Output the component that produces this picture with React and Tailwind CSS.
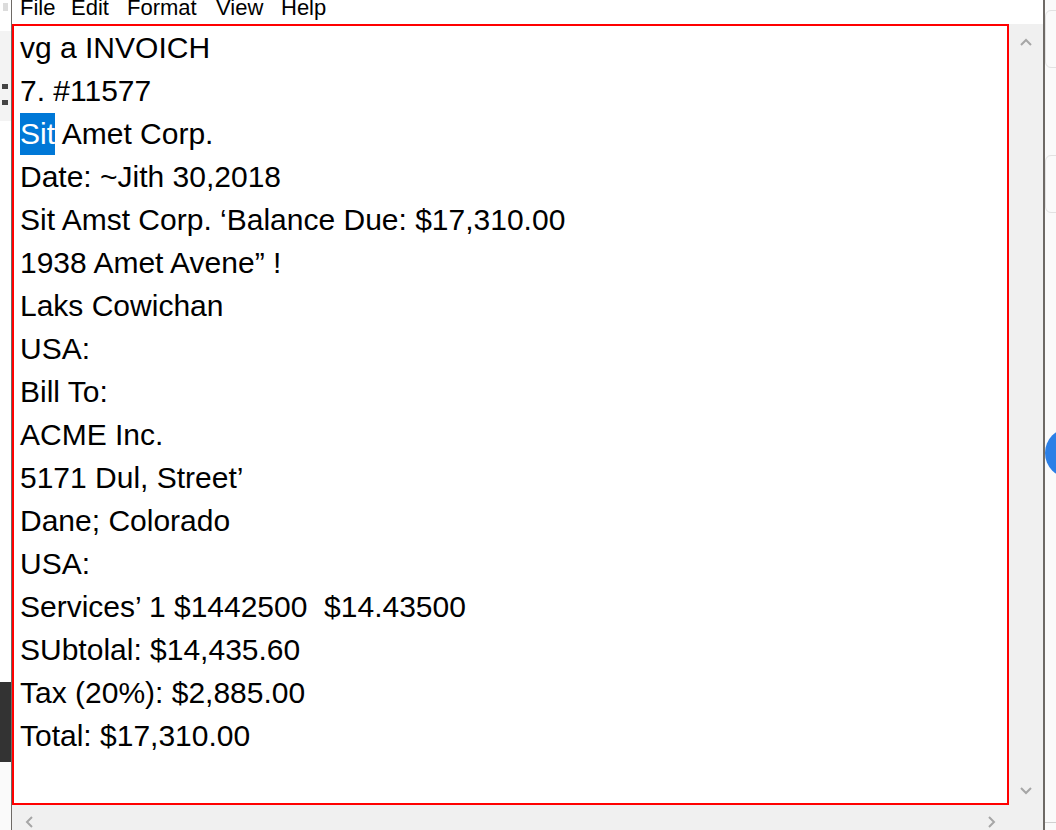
import React from 'react';

const lines = [
  'vg a INVOICH',
  '7. #11577',
  null,
  'Date: ~Jith 30,2018',
  'Sit Amst Corp. \u2018Balance Due: $17,310.00',
  '1938 Amet Avene\u201d !',
  'Laks Cowichan',
  'USA:',
  'Bill To:',
  'ACME Inc.',
  '5171 Dul, Street\u2019',
  'Dane; Colorado',
  'USA:',
  'Services\u2019 1 $1442500  $14.43500',
  'SUbtolal: $14,435.60',
  'Tax (20%): $2,885.00',
  'Total: $17,310.00',
];

const Chevron = ({ dir }) => {
  const pts = {
    up: '1,8 6,3 11,8',
    down: '1,3 6,8 11,3',
    left: '8,1 3,6 8,11',
    right: '3,1 8,6 3,11',
  }[dir];
  return (
    <svg width="12" height="12" viewBox="0 0 12 12">
      <polyline points={pts} fill="none" stroke="#a6a6a6" strokeWidth="2" />
    </svg>
  );
};

export default function App() {
  return (
    <div className="w-[1056px] h-[830px] flex bg-white overflow-hidden font-['Liberation_Sans',Arial,sans-serif] text-black">
      {/* left desktop strip */}
      <div className="w-[11px] flex flex-col">
        <div className="h-[3px]" />
        <div className="h-[8px] mx-[3px] bg-[#dcdcdc]" />
        <div className="h-[20px]" />
        <div className="h-[90px] bg-[#f3f3f3] flex flex-col">
          <div className="h-[5px] w-[6px] ml-[2px] mt-[53px] bg-[#444]" />
          <div className="h-[5px] w-[6px] ml-[2px] mt-[11px] bg-[#444]" />
        </div>
        <div className="flex-1 min-h-0" />
        <div className="h-[80px] bg-[#333333]" />
        <div className="h-[68px] bg-[#fafafa]" />
      </div>
      <div className="w-[1px] bg-[#6e6a66]" />

      {/* notepad window */}
      <div className="w-[1031px] flex flex-col">
        <div className="h-[24px] overflow-hidden">
          <div className="flex items-start text-[22px] leading-[22px] -mt-[3px] pl-[8px]">
            <span className="w-[51px]">File</span>
            <span className="w-[56px]">Edit</span>
            <span className="w-[89px]">Format</span>
            <span className="w-[65px]">View</span>
            <span>Help</span>
          </div>
        </div>
        <div className="flex flex-1 min-h-0">
          <div className="w-[997px] h-[781px] border-2 border-[#ff0000] pl-[6px] text-[30px] leading-[43px] overflow-hidden">
            {lines.map((l, i) =>
              l === null ? (
                <div key={i} className="h-[43px] whitespace-pre">
                  <span className="inline-block bg-[#0078d7] text-white leading-[42px]">Sit</span> Amet Corp.
                </div>
              ) : (
                <div key={i} className="h-[43px] whitespace-pre">{l}</div>
              )
            )}
          </div>
          <div className="w-[34px] bg-[#f0f0f0] flex flex-col items-center justify-between pt-[13px] pb-[8px]">
            <Chevron dir="up" />
            <Chevron dir="down" />
          </div>
        </div>
        <div className="h-[25px] bg-[#f0f0f0] flex items-center justify-between pl-[12px] pr-[45px] pt-[8px]">
          <Chevron dir="left" />
          <Chevron dir="right" />
        </div>
      </div>

      <div className="w-[2px] bg-[#6e6a66]" />
      {/* right desktop strip */}
      <div className="w-[11px] bg-[#fafafa] flex flex-col overflow-hidden">
        <div className="h-[10px]" />
        <div className="h-[58px] w-[20px] border border-[#e2e2e2] rounded-l-[6px]" />
        <div className="h-[87px]" />
        <div className="h-[58px] w-[20px] border border-[#e2e2e2] rounded-l-[6px]" />
        <div className="h-[215px]" />
        <div className="h-[50px] w-[50px] rounded-full bg-[#2b7fe6]" />
        <div className="flex-1" />
        <div className="h-[1px] bg-[#d0d0d0] mb-[7px]" />
      </div>
    </div>
  );
}
